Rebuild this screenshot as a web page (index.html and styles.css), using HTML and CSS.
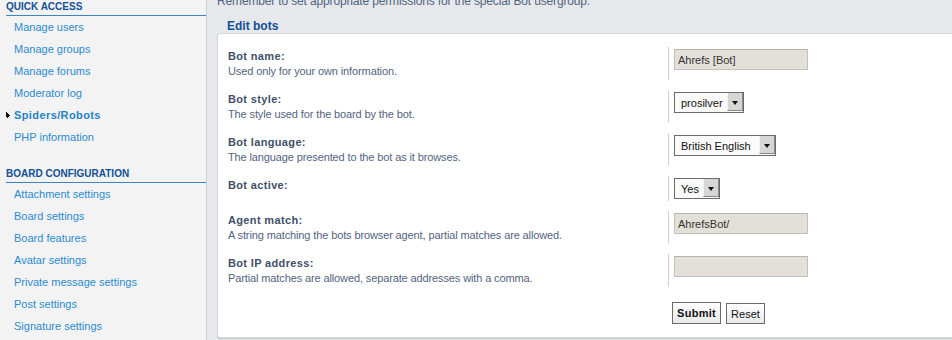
FILE: index.html
```html
<!DOCTYPE html>
<html lang="en">
<head>
    <meta charset="UTF-8">
    <title>Edit bots</title>
    <link rel="stylesheet" href="styles.css">
</head>
<body>
    <div class="layout">
        <!-- Left menu -->
        <div class="menu">
            <div class="menu-header">Quick access</div>
            <ul class="menu-list">
                <li><a href="#">Manage users</a></li>
                <li><a href="#">Manage groups</a></li>
                <li><a href="#">Manage forums</a></li>
                <li><a href="#">Moderator log</a></li>
                <li class="active">
                    <svg class="bullet" width="5" height="6" viewBox="0 0 5 6"><path d="M0 0h1v1h1v1h1v1h1v1h-1v1h-1v1h-1v-1h-1z" fill="#111"/></svg>
                    <a href="#">Spiders/Robots</a>
                </li>
                <li><a href="#">PHP information</a></li>
            </ul>

            <div class="menu-header">Board configuration</div>
            <ul class="menu-list">
                <li><a href="#">Attachment settings</a></li>
                <li><a href="#">Board settings</a></li>
                <li><a href="#">Board features</a></li>
                <li><a href="#">Avatar settings</a></li>
                <li><a href="#">Private message settings</a></li>
                <li><a href="#">Post settings</a></li>
                <li><a href="#">Signature settings</a></li>
            </ul>
        </div>

        <!-- Main content -->
        <div class="main">
            <p class="notice">Remember to set appropriate permissions for the special Bot usergroup.</p>

            <div class="legend">Edit bots</div>
            <div class="panel">
                <dl class="row">
                    <dt><label>Bot name:</label><span class="explain">Used only for your own information.</span></dt>
                    <dd><input class="text" type="text" value="Ahrefs [Bot]"></dd>
                </dl>
                <dl class="row">
                    <dt><label>Bot style:</label><span class="explain">The style used for the board by the bot.</span></dt>
                    <dd><span class="select w-style"><select><option>prosilver</option></select></span></dd>
                </dl>
                <dl class="row">
                    <dt><label>Bot language:</label><span class="explain">The language presented to the bot as it browses.</span></dt>
                    <dd><span class="select w-lang"><select><option>British English</option></select></span></dd>
                </dl>
                <dl class="row">
                    <dt><label>Bot active:</label></dt>
                    <dd><span class="select w-yes"><select><option>Yes</option></select></span></dd>
                </dl>
                <dl class="row">
                    <dt><label>Agent match:</label><span class="explain">A string matching the bots browser agent, partial matches are allowed.</span></dt>
                    <dd><input class="text" type="text" value="AhrefsBot/"></dd>
                </dl>
                <dl class="row">
                    <dt><label>Bot IP address:</label><span class="explain">Partial matches are allowed, separate addresses with a comma.</span></dt>
                    <dd><input class="text" type="text" value=""></dd>
                </dl>

                <div class="submit-buttons">
                    <button class="button submit">Submit</button>
                    <button class="button">Reset</button>
                </div>
            </div>
        </div>
    </div>
</body>
</html>
```

FILE: styles.css
```css
body {
    margin: 0;
    background: #e6e8eb;
    font-family: "Liberation Sans", Arial, sans-serif;
    font-size: 11px;
    color: #536482;
    overflow: hidden;
}
.layout {
    display: flex;
    min-height: 100vh;
}
.menu {
    width: 200px;
    flex-shrink: 0;
    padding-left: 6px;
    background: #f3f3f3;
    border-right: 1px solid #cdd1d6;
}
.menu-header {
    margin-top: 19px;
    padding: 1px 0 2px;
    line-height: 12px;
    font-size: 10px;
    font-weight: bold;
    text-transform: uppercase;
    color: #115098;
    border-bottom: 1px solid #3d83c6;
}
.menu-header:first-child {
    margin-top: 0;
}
.menu-list {
    list-style: none;
    margin: 0;
    padding: 0;
}
.menu-list li {
    position: relative;
    line-height: 22px;
    padding-left: 8px;
}
.menu-list a {
    color: #2a8bd0;
    text-decoration: none;
}
.menu-list .active a {
    font-weight: bold;
    letter-spacing: 0.4px;
    color: #1f82c6;
}
.bullet {
    position: absolute;
    left: 0;
    top: 8px;
}
.main {
    flex: 1;
    overflow: hidden;
    padding-left: 10px;
}
.notice {
    margin: -6px 0 0;
    line-height: 14px;
    font-size: 12px;
    letter-spacing: -0.15px;
}
.legend {
    margin-top: 12px;
    padding-left: 10px;
    line-height: 13px;
    font-size: 12px;
    font-weight: bold;
    color: #115098;
}
.panel {
    margin-right: -6px;
    padding: 8px 10px 13px;
    background: #fff;
    border: 1px solid #d6d8db;
    border-radius: 3px;
    box-shadow: 0 1px 1px #c8c8c8;
}
.row {
    display: flex;
    margin: 0;
    padding: 5px 0;
}
.row dt {
    width: 440px;
    flex-shrink: 0;
    padding: 2px 0 1px;
    line-height: 15px;
    color: #425067;
}
.row label {
    display: block;
    font-weight: bold;
    letter-spacing: 0.35px;
}
.explain {
    display: block;
    color: #536482;
    letter-spacing: -0.12px;
}
.row dd {
    margin: 0;
    padding: 2px 0 2px 5px;
    border-left: 1px solid #d2d2d2;
}
.text {
    display: block;
    box-sizing: border-box;
    width: 134px;
    height: 21px;
    margin: 0;
    padding: 0 3px;
    font-family: inherit;
    font-size: 11px;
    color: #333;
    background: #e3dfd9;
    border: 1px solid #c4c0b9;
    border-top-color: #b8b4ad;
}
.select {
    position: relative;
    display: block;
    box-sizing: border-box;
    height: 21px;
    border: 1px solid #6b6b6b;
    background: #fafafa;
}
.select select {
    appearance: none;
    -webkit-appearance: none;
    width: 100%;
    height: 19px;
    margin: 0;
    padding: 0 0 0 6px;
    border: 0;
    background: transparent;
    font-family: inherit;
    font-size: 11px;
    color: #111;
}
.select::after {
    content: "";
    position: absolute;
    top: 0;
    right: 0;
    width: 16px;
    height: 18px;
    background: #d6d6d6;
    border-left: 1px solid #f2f2f2;
    border-right: 1px solid #8a8a8a;
    border-bottom: 1px solid #8a8a8a;
    box-sizing: border-box;
}
.select::before {
    content: "";
    position: absolute;
    z-index: 1;
    top: 8px;
    right: 5px;
    border-left: 3px solid transparent;
    border-right: 3px solid transparent;
    border-top: 4px solid #111;
}
.w-style { width: 70px; }
.w-lang { width: 102px; }
.w-yes { width: 46px; }
.submit-buttons {
    display: flex;
    align-items: flex-end;
    gap: 5px;
    margin-top: 10px;
    padding-left: 444px;
}
.button {
    box-sizing: border-box;
    height: 21px;
    padding: 0 4px;
    font-family: inherit;
    font-size: 11px;
    color: #111;
    background: linear-gradient(#ffffff, #e8e8e8);
    border: 1px solid #6b6b6b;
    border-radius: 0;
}
.button.submit {
    height: 22px;
    font-weight: bold;
    letter-spacing: 0.3px;
}
```
